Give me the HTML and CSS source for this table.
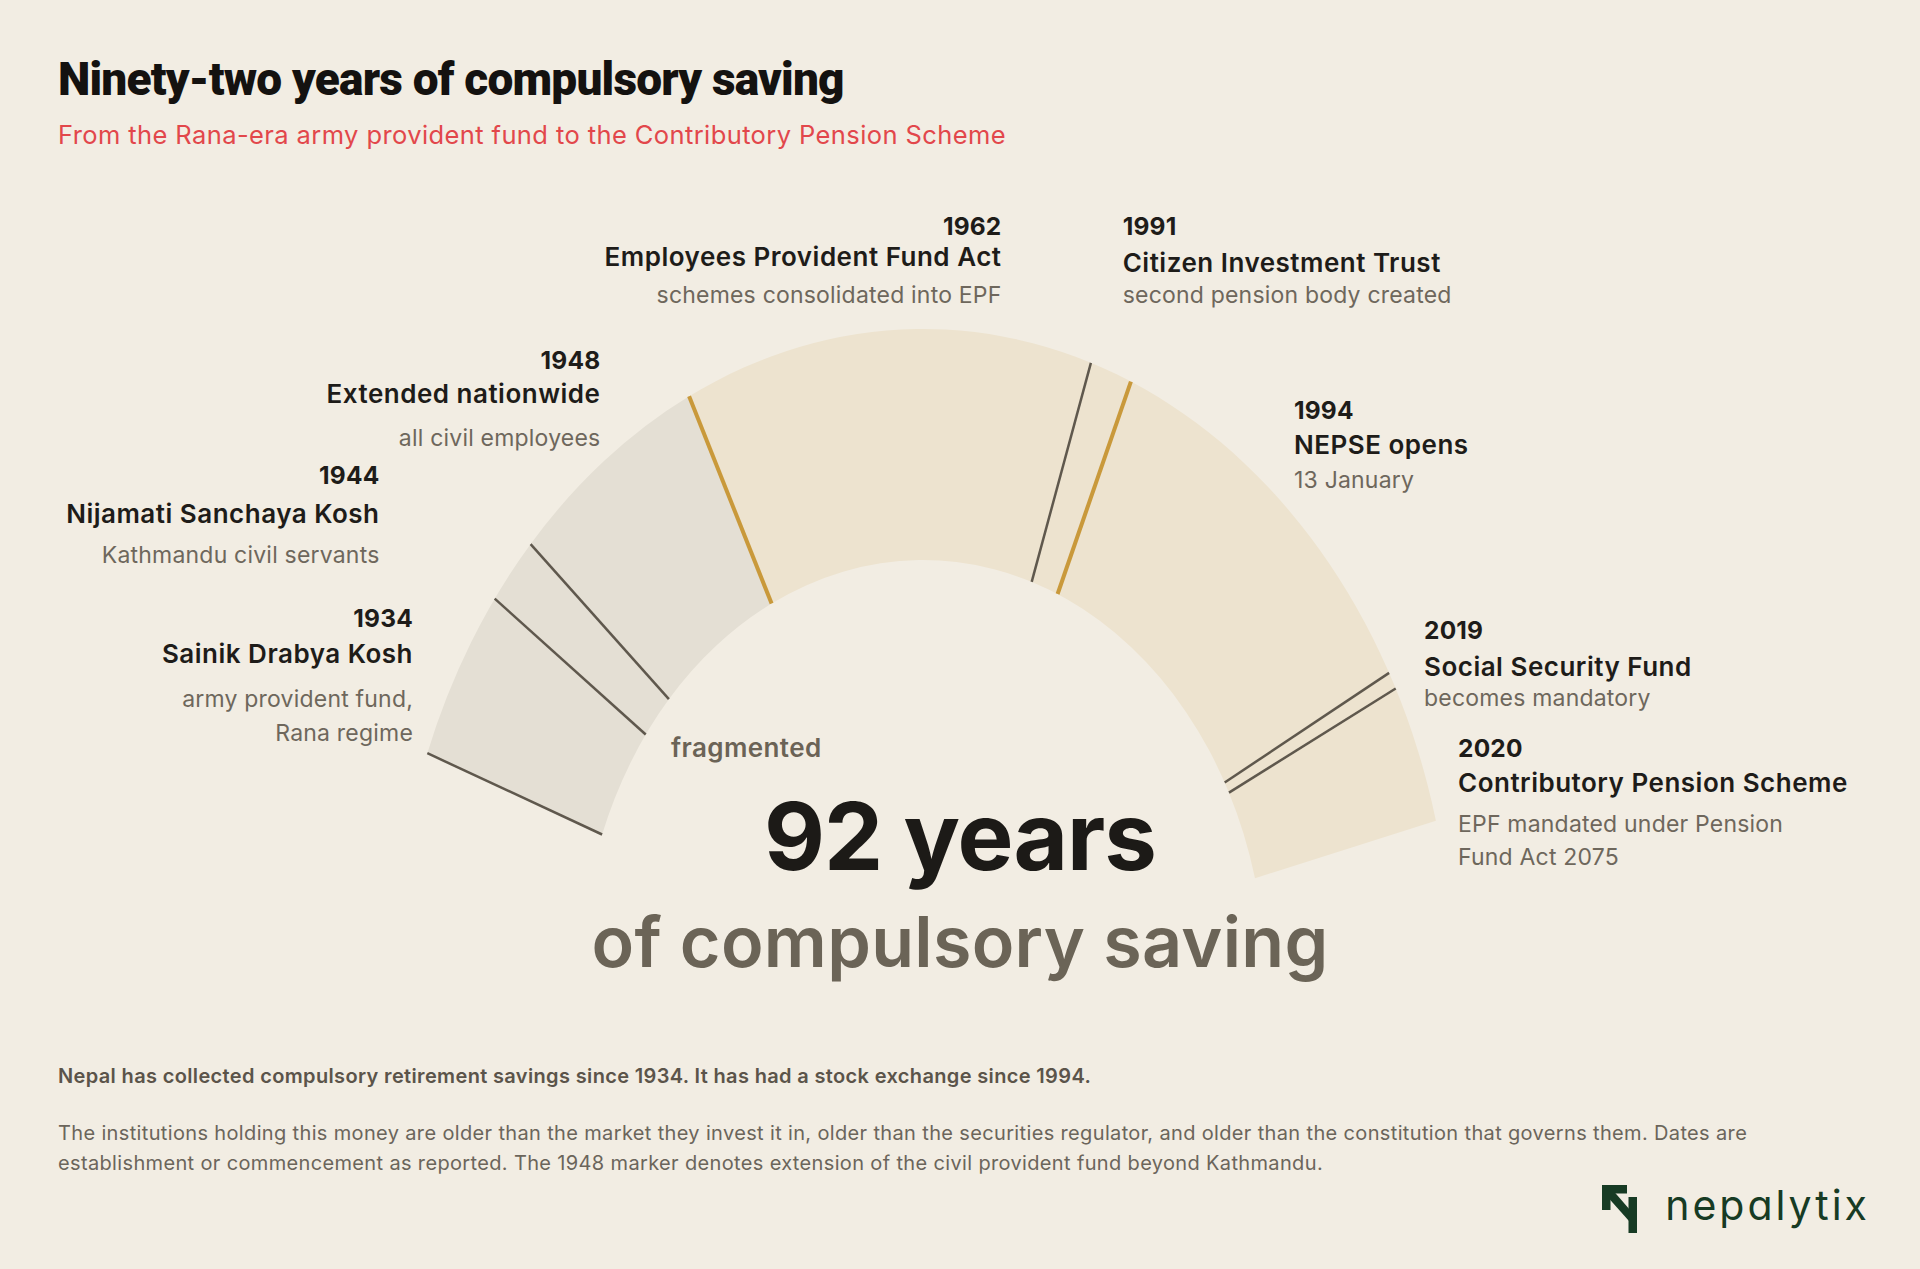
FILE: index.html
```html
<!DOCTYPE html>
<html lang="en">
<head>
<meta charset="utf-8">
<title>Ninety-two years of compulsory saving</title>
<link rel="stylesheet" href="styles.css">
</head>
<body>
<div class="page">
  <header class="header">
    <h1 class="title"><span class="title-text">Ninety-two years of compulsory saving</span></h1>
    <p class="subtitle">From the Rana-era army provident fund to the Contributory Pension Scheme</p>
  </header>

  <svg class="chart" viewBox="0 170 1920 840" width="1920" height="840" xmlns="http://www.w3.org/2000/svg">
    <path class="seg-grey" d="M 427.35 753.2 A 529.5 654.5 0 0 1 689.1 396.3 L 771.6 603.6 A 342.8 423.5 0 0 0 602.1 834.5 Z"/>
    <path class="seg-beige" d="M 689.1 396.3 A 529.5 654.5 0 0 1 1435.9 820.7 L 1255.0 878.2 A 342.8 423.5 0 0 0 771.6 603.6 Z"/>

    <line class="tick" x1="427.35" y1="753.2" x2="602.1" y2="834.5"/>
    <line class="tick" x1="494.7" y1="598.6" x2="645.7" y2="734.5"/>
    <line class="tick" x1="530.6" y1="544.1" x2="668.9" y2="699.2"/>
    <line class="tick gold" x1="689.1" y1="396.3" x2="771.6" y2="603.6"/>
    <line class="tick" x1="1090.9" y1="362.8" x2="1031.7" y2="581.9"/>
    <line class="tick gold" x1="1130.9" y1="381.6" x2="1057.6" y2="594.0"/>
    <line class="tick" x1="1389.1" y1="672.9" x2="1224.7" y2="782.5"/>
    <line class="tick" x1="1395.7" y1="688.5" x2="1229.0" y2="792.6"/>

    <g class="lbl end">
      <text class="yr" x="1001.5" y="235">1962</text>
      <text class="nm" x="1001.5" y="266">Employees Provident Fund Act</text>
      <text class="ds" x="1001.5" y="303.3">schemes consolidated into EPF</text>
    </g>
    <g class="lbl">
      <text class="yr" x="1122.7" y="235">1991</text>
      <text class="nm" x="1122.7" y="271.7">Citizen Investment Trust</text>
      <text class="ds" x="1122.7" y="303.3">second pension body created</text>
    </g>
    <g class="lbl end">
      <text class="yr" x="600.4" y="369">1948</text>
      <text class="nm" x="600.4" y="403.3">Extended nationwide</text>
      <text class="ds" x="600.4" y="445.7">all civil employees</text>
    </g>
    <g class="lbl">
      <text class="yr" x="1294" y="419.3">1994</text>
      <text class="nm" x="1294" y="454">NEPSE opens</text>
      <text class="ds" x="1294" y="487.7">13 January</text>
    </g>
    <g class="lbl end">
      <text class="yr" x="379.5" y="484">1944</text>
      <text class="nm" x="379.5" y="522.7">Nijamati Sanchaya Kosh</text>
      <text class="ds" x="379.5" y="563.3">Kathmandu civil servants</text>
    </g>
    <g class="lbl end">
      <text class="yr" x="413" y="626.7">1934</text>
      <text class="nm" x="413" y="663.3">Sainik Drabya Kosh</text>
      <text class="ds" x="413" y="706.7">army provident fund,</text>
      <text class="ds" x="413" y="740.7">Rana regime</text>
    </g>
    <g class="lbl">
      <text class="yr" x="1424" y="639.3">2019</text>
      <text class="nm" x="1424" y="676">Social Security Fund</text>
      <text class="ds" x="1424" y="706">becomes mandatory</text>
    </g>
    <g class="lbl">
      <text class="yr" x="1458" y="757.3">2020</text>
      <text class="nm" x="1458" y="791.7">Contributory Pension Scheme</text>
      <text class="ds" x="1458" y="831.7">EPF mandated under Pension</text>
      <text class="ds" x="1458" y="865">Fund Act 2075</text>
    </g>

    <text class="frag" x="671" y="757.3">fragmented</text>
    <text class="big" x="960" y="870">92 years</text>
    <text class="big-sub" x="960" y="966.7">of compulsory saving</text>
  </svg>

  <footer class="footer">
    <p class="lead">Nepal has collected compulsory retirement savings since 1934. It has had a stock exchange since 1994.</p>
    <p class="note">The institutions holding this money are older than the market they invest it in, older than the securities regulator, and older than the constitution that governs them. Dates are establishment or commencement as reported. The 1948 marker denotes extension of the civil provident fund beyond Kathmandu.</p>
    <div class="brand">
      <svg class="brand-mark" viewBox="0 0 35 48" width="35" height="48" xmlns="http://www.w3.org/2000/svg">
        <polygon points="0,0 25,0 25,8.5 8.5,8.5 8.5,25 0,25"/>
        <polygon points="2.5,8.5 8.5,2.5 35,33 35,45"/>
        <rect x="26.5" y="12" width="8.5" height="36"/>
      </svg>
      <span class="brand-name">nepalytix</span>
    </div>
  </footer>
</div>
</body>
</html>
```

FILE: styles.css
```css
html, body {
  margin: 0;
  padding: 0;
  background: #f2ede3;
}

body {
  width: 1920px;
  height: 1269px;
  overflow: hidden;
  font-family: "Inter", "Liberation Sans", sans-serif;
}

.page {
  display: flex;
  flex-direction: column;
  width: 1920px;
  height: 1269px;
}

.header {
  box-sizing: border-box;
  height: 170px;
  padding: 56px 0 0 58px;
}

.title {
  margin: 0;
  font-family: "Roboto", "Liberation Sans", sans-serif;
  font-weight: 900;
  font-size: 46px;
  line-height: 46px;
  color: #141210;
  white-space: nowrap;
}

.title-text {
  display: inline-block;
  letter-spacing: -0.8px;
}

.subtitle {
  margin: 20px 0 0 0;
  font-size: 25.5px;
  line-height: 25px;
  font-weight: 400;
  color: #e2474b;
  letter-spacing: 0.4px;
}

.chart {
  display: block;
  flex: none;
}

.seg-grey { fill: #e4dfd4; }
.seg-beige { fill: #ede3cf; }

.tick {
  stroke: #5f584d;
  stroke-width: 2.5;
}
.tick.gold {
  stroke: #c9993b;
  stroke-width: 4;
}

.lbl text {
  font-family: "Inter", "Liberation Sans", sans-serif;
}
.lbl.end text { text-anchor: end; }

.yr {
  font-size: 24.5px;
  font-weight: 700;
  fill: #1e1c19;
  letter-spacing: 0.2px;
}
.nm {
  font-size: 26px;
  font-weight: 600;
  fill: #1e1c19;
  letter-spacing: 0.5px;
}
.ds {
  font-size: 23px;
  font-weight: 400;
  fill: #6e675c;
  letter-spacing: 0.2px;
}

.frag {
  font-family: "Inter", "Liberation Sans", sans-serif;
  font-size: 26px;
  font-weight: 600;
  fill: #6b6356;
  letter-spacing: 0.4px;
}
.big {
  font-family: "Inter", "Liberation Sans", sans-serif;
  font-size: 94px;
  font-weight: 700;
  fill: #1c1a17;
  text-anchor: middle;
  letter-spacing: -1px;
}
.big-sub {
  font-family: "Inter", "Liberation Sans", sans-serif;
  font-size: 70px;
  font-weight: 600;
  fill: #6b6457;
  text-anchor: middle;
  letter-spacing: 0.3px;
}

.footer {
  box-sizing: border-box;
  padding: 51px 53px 0 58px;
  flex: 1;
  display: flex;
  flex-direction: column;
}

.lead {
  margin: 0;
  font-size: 20px;
  line-height: 30px;
  font-weight: 600;
  color: #5b544a;
  letter-spacing: 0.35px;
}

.note {
  margin: 27px 0 0 0;
  max-width: 1720px;
  font-size: 20px;
  line-height: 30px;
  font-weight: 400;
  color: #6b655b;
  letter-spacing: 0.35px;
}

.brand {
  margin-top: 7px;
  display: flex;
  align-items: flex-start;
  justify-content: flex-end;
  gap: 28px;
  color: #173b24;
}

.brand-mark {
  display: block;
  fill: #173b24;
}

.brand-name {
  font-size: 41px;
  line-height: 40px;
  font-weight: 400;
  letter-spacing: 3px;
  margin-right: -3px;
  font-feature-settings: "cv11" 1;
}
```
